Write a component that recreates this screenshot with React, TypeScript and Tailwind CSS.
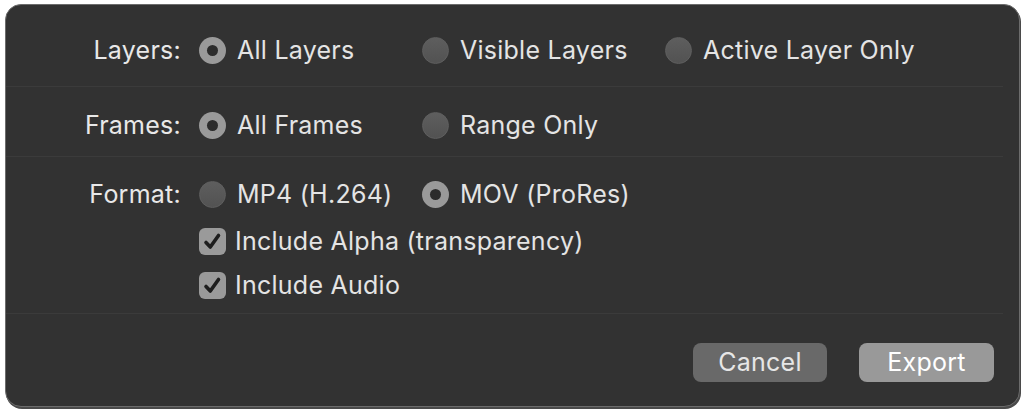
import React from 'react';

const font = { fontFamily: 'Inter, "Noto Sans", sans-serif' };

function Radio({ label, checked = false, className = '' }: { label: string; checked?: boolean; className?: string }) {
  return (
    <div className={`flex items-center gap-[11px] ${className}`}>
      {checked ? (
        <span className="flex h-[27px] w-[27px] flex-shrink-0 items-center justify-center rounded-full bg-[#9a9a9a]">
          <span className="h-[11px] w-[11px] rounded-full bg-[#2c2c2c]" />
        </span>
      ) : (
        <span className="h-[27px] w-[27px] flex-shrink-0 rounded-full border border-[#5f5f5f] bg-gradient-to-b from-[#5e5e5e] to-[#525252]" />
      )}
      <span className="text-[25px] leading-none tracking-[0.25px] text-[#e4e4e4]">{label}</span>
    </div>
  );
}

function Checkbox({ label }: { label: string }) {
  return (
    <div className="flex items-center gap-[9px]">
      <span className="flex h-[27px] w-[27px] flex-shrink-0 items-center justify-center rounded-[6px] bg-[#9a9a9a]">
        <svg width="21" height="21" viewBox="0 0 21 21" fill="none">
          <path d="M4 11.5 L8.3 16 L16.5 4.5" stroke="#1e1e1e" strokeWidth="3.6" strokeLinecap="round" strokeLinejoin="round" />
        </svg>
      </span>
      <span className="text-[25px] leading-none tracking-[0.25px] text-[#e4e4e4]">{label}</span>
    </div>
  );
}

function Label({ children }: { children: React.ReactNode }) {
  return (
    <div className="w-[193px] flex-shrink-0 pr-[18px] text-right text-[25px] leading-none tracking-[0.25px] text-[#e8e8e8]">
      {children}
    </div>
  );
}

function Separator() {
  return <div className="mr-[16px] h-px bg-[#3b3b3b]" />;
}

export default function App() {
  return (
    <div className="h-[412px] w-[1025px] bg-white pl-[5px] pt-[4px]" style={font}>
      <div className="flex h-[403px] w-[1015px] flex-col overflow-hidden rounded-[16px] border border-[#6c6c6c] bg-[#323232] shadow-[1px_2px_0_#4a4a4a]">
        <div className="flex h-[81px] items-center pt-[9px]">
          <Label>Layers:</Label>
          <Radio label="All Layers" checked className="w-[223px]" />
          <Radio label="Visible Layers" className="w-[243px]" />
          <Radio label="Active Layer Only" />
        </div>
        <Separator />
        <div className="flex h-[69px] items-center pt-[7px]">
          <Label>Frames:</Label>
          <Radio label="All Frames" checked className="w-[223px]" />
          <Radio label="Range Only" />
        </div>
        <Separator />
        <div className="flex h-[156px] flex-col pt-[24px]">
          <div className="flex items-center">
            <Label>Format:</Label>
            <Radio label="MP4 (H.264)" className="w-[223px]" />
            <Radio label="MOV (ProRes)" checked />
          </div>
          <div className="ml-[193px] mt-[20px] flex flex-col gap-[17px]">
            <Checkbox label="Include Alpha (transparency)" />
            <Checkbox label="Include Audio" />
          </div>
        </div>
        <Separator />
        <div className="flex flex-1 items-start justify-end gap-[32px] pr-[25px] pt-[29px]">
          <button className="h-[39px] w-[134px] rounded-[8px] bg-[#696969] text-[25px] tracking-[0.25px] text-[#e6e6e6]">
            Cancel
          </button>
          <button className="h-[39px] w-[135px] rounded-[8px] bg-[#999999] text-[25px] tracking-[0.25px] text-white">
            Export
          </button>
        </div>
      </div>
    </div>
  );
}
